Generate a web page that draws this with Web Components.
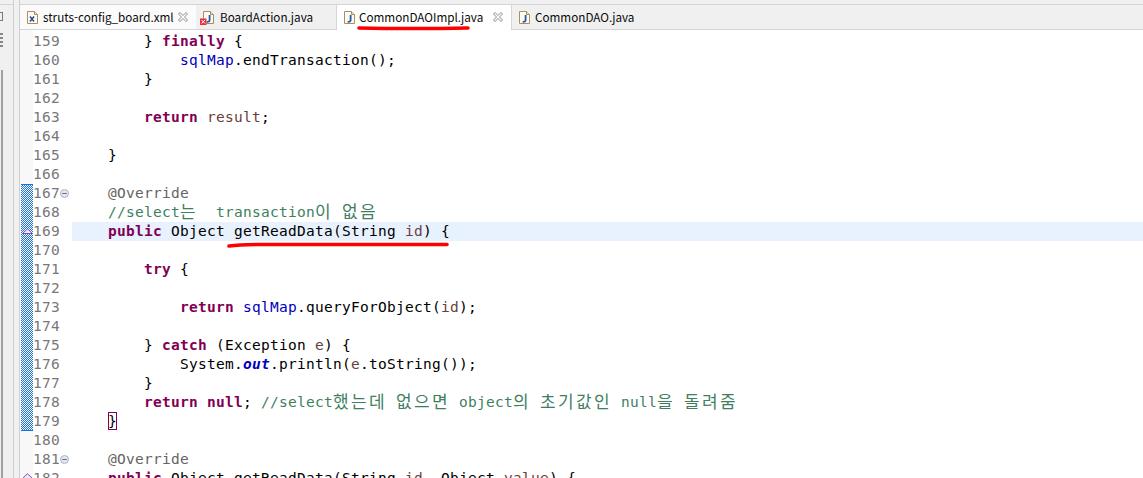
<!DOCTYPE html>
<html lang="ko"><head><meta charset="utf-8"><title>Editor</title>
<style>
html,body{margin:0;padding:0;background:#fff;overflow:hidden}
body{width:1143px;height:478px}
</style></head><body>
<ide-window>
  <ide-tabbar>
    <ide-tab icon="x" close hot w="176">struts-config_board.xml</ide-tab>
    <ide-tab icon="jerr" w="140">BoardAction.java</ide-tab>
    <ide-tab icon="j" close active w="176">CommonDAOImpl.java</ide-tab>
    <ide-tab icon="j" w="140">CommonDAO.java</ide-tab>
  </ide-tabbar>
  <ide-editor>
    <code-line n="159">        } <j-k>finally</j-k> {</code-line>
    <code-line n="160">            <j-f>sqlMap</j-f>.endTransaction();</code-line>
    <code-line n="161">        }</code-line>
    <code-line n="162"></code-line>
    <code-line n="163">        <j-k>return</j-k> <j-v>result</j-v>;</code-line>
    <code-line n="164"></code-line>
    <code-line n="165">    }</code-line>
    <code-line n="166"></code-line>
    <code-line n="167" fold>    <j-a>@Override</j-a></code-line>
    <code-line n="168">    <j-c>//select<j-h>는</j-h>  transaction<j-h>이</j-h> <j-h>없음</j-h></j-c></code-line>
    <code-line n="169" current>    <j-k>public</j-k> Object getReadData(String <j-v>id</j-v>) {</code-line>
    <code-line n="170"></code-line>
    <code-line n="171">        <j-k>try</j-k> {</code-line>
    <code-line n="172"></code-line>
    <code-line n="173">            <j-k>return</j-k> <j-f>sqlMap</j-f>.queryForObject(<j-v>id</j-v>);</code-line>
    <code-line n="174"></code-line>
    <code-line n="175">        } <j-k>catch</j-k> (Exception <j-v>e</j-v>) {</code-line>
    <code-line n="176">            System.<j-s>out</j-s>.println(<j-v>e</j-v>.toString());</code-line>
    <code-line n="177">        }</code-line>
    <code-line n="178">        <j-k>return</j-k> <j-k>null</j-k>; <j-c>//select<j-h>했는데</j-h> <j-h>없으면</j-h> object<j-h>의</j-h> <j-h>초기값인</j-h> null<j-h>을</j-h> <j-h>돌려줌</j-h></j-c></code-line>
    <code-line n="179">    <j-b>}</j-b></code-line>
    <code-line n="180"></code-line>
    <code-line n="181" fold>    <j-a>@Override</j-a></code-line>
    <code-line n="182">    <j-k>public</j-k> Object getReadData(String <j-v>id</j-v>, Object <j-v>value</j-v>) {</code-line>
  </ide-editor>
</ide-window>
<script>
const def=(name,css,html='<slot></slot>')=>customElements.define(name,class extends HTMLElement{
  constructor(){super();this.attachShadow({mode:'open'}).innerHTML=`<style>${css}</style>${html}`;}
});
def('j-k',':host{color:#7f0055;font-weight:700}');
def('j-f',':host{color:#0000c0}');
def('j-v',':host{color:#6a3e3e}');
def('j-c',':host{color:#3f7f5f}');
def('j-a',':host{color:#646464}');
def('j-s',':host{color:#0000c0;font-weight:700;font-style:italic}');
def('j-h',':host{font-family:"Noto Sans CJK KR",sans-serif;font-size:17px;letter-spacing:2.36px;line-height:0;vertical-align:-1px}');
def('j-b',':host{display:inline-block;box-sizing:border-box;width:9px;height:18px;outline:1px solid #7f0055;outline-offset:-1px;line-height:18px;vertical-align:top}');

const fileIcon=(mark,err)=>`<svg width="${err?15:13}" height="15" viewBox="0 0 ${err?15:13} 15" aria-hidden="true">
<g transform="translate(${err?2:0},0)"><path d="M1.5 1.5h7l3 3v9h-10z" fill="#fbfaf5" stroke="#a88f5c"/><path d="M8.5 1.5v3h3" fill="#efe6cf" stroke="#a88f5c"/>
${mark==='x'?'<path d="M4 6.5l4 5M8 6.5l-4 5" stroke="#2c4f88" stroke-width="1.5" fill="none"/>'
:'<path d="M7.6 5v5c0 1.6-1 2-2.9 1.8" stroke="#245a9e" stroke-width="1.8" fill="none"/>'}</g>
${err?'<rect x="0" y="8.5" width="6.5" height="6.5" fill="#e2323c"/><path d="M1.5 10l3.5 3.5M5 10l-3.5 3.5" stroke="#fff" stroke-width="1"/>':''}</svg>`;

customElements.define('ide-tab',class extends HTMLElement{
  constructor(){super();
    const ic=this.getAttribute('icon');
    const active=this.hasAttribute('active');
    const close=this.hasAttribute('close');
    const s=this.attachShadow({mode:'open'});
    s.innerHTML=`<style>
    :host{display:flex;align-items:center;box-sizing:border-box;height:24px;padding-left:${ic==='jerr'?4:6}px;
      width:${this.getAttribute('w')}px;flex:none;color:#0a0a0a;font:11.7px/16px "Noto Sans CJK KR","Noto Sans",sans-serif;
      ${active?'background:#fff;margin-bottom:-1px;height:25px;padding-bottom:1px;border-left:1px solid #d6d6d6;border-right:1px solid #d6d6d6;':''}
      ${this.hasAttribute('hot')?'background:#fbfbfb;':''}}
    .i{display:flex;flex:none;margin-right:${ic==='jerr'?5:(active?3:4)}px}
    .t{flex:none;white-space:nowrap}
    .x{flex:none;margin-left:auto;margin-right:8px;display:flex}
    </style><span class="i">${fileIcon(ic==='x'?'x':'j',ic==='jerr')}</span><span class="t"><slot></slot></span>
    ${close?'<span class="x"><svg width="10" height="10" viewBox="0 0 10 10" aria-hidden="true"><path d="M.5 2l1.5-1.5L5 3.5 8 .5 9.5 2l-3 3 3 3L8 9.5l-3-3-3 3L.5 8l3-3z" fill="#fff" stroke="#8a8a8a"/></svg></span>':''}`;
  }
});
def('ide-tabbar',`:host{display:flex;box-sizing:border-box;height:26px;background:#f0f0f0;
  border-top:1px solid #d4d4d4;border-bottom:1px solid #d4d4d4;flex:none}`);

customElements.define('code-line',class extends HTMLElement{
  constructor(){super();
    const s=this.attachShadow({mode:'open'});
    const fold=this.hasAttribute('fold');
    s.innerHTML=`<style>
    :host{display:flex;height:19px;line-height:19px;white-space:pre;overflow:visible}
    .n{width:27px;flex:none;color:#787878;text-align:right}
    .f{width:12px;flex:none;display:flex;align-items:center}
    .c{flex:1;min-width:0;height:19px;${this.hasAttribute('current')?'background:#e8f2fe;':''}}
    </style><span class="n">${this.getAttribute('n')}</span><span class="f">${fold?
    '<svg width="9" height="9" viewBox="0 0 9 9" aria-hidden="true"><circle cx="4.5" cy="4.5" r="4" fill="#e4e8ee" stroke="#a9b4c4"/><path d="M2.2 4.5h4.6" stroke="#5f6f86"/></svg>':''}</span><span class="c"><slot></slot></span>`;
  }
});

const tri=t=>`<svg class="m" style="top:${t}px" width="11" height="6" viewBox="0 0 11 6" aria-hidden="true"><path d="M.5 5.5L5.5 .8l5 4.7z" fill="#efe9fb" stroke="#7a4fc0"/></svg>`;
def('ide-editor',`:host{display:flex;flex:1;min-height:0;overflow:hidden;background:#fff;color:#000;
  font:14.5px/19px "DejaVu Sans Mono",monospace;letter-spacing:.27px}
  .r{width:12px;flex:none;background:#f8f8f8;padding:154px 0 0 1px;position:relative}
  .b{display:block;shape-rendering:crispEdges}
  .m{position:absolute;left:2px}
  .l{flex:1;min-width:0;padding-top:2px}`,
  `<div class="r"><svg class="b" width="12" height="247" aria-hidden="true"><defs><pattern id="ck" width="2" height="2" patternUnits="userSpaceOnUse"><rect width="2" height="2" fill="#fff"/><rect width="1" height="1" fill="#1572dc"/><rect x="1" y="1" width="1" height="1" fill="#1572dc"/></pattern></defs>
   <rect width="12" height="247" fill="url(#ck)"/><rect width="12" height="1" fill="#1572dc"/><rect y="246" width="12" height="1" fill="#1572dc"/></svg>
   ${tri(198)}${tri(443)}
   </div><div class="l"><slot></slot></div>`);

def('ide-window',`:host{display:flex;width:1143px;height:478px;overflow:hidden;position:relative;font-family:"Noto Sans",sans-serif}
  .side{width:14px;flex:none;box-sizing:border-box;background:#f0f0f0;border-right:1px solid #cfcfcf;position:relative}
  .top{height:4px;border-bottom:1px solid #d4d4d4}
  .ic1{position:absolute;left:0;top:12px;width:3px;height:9px;border:1px solid #777;border-left:0;box-sizing:border-box}
  .ic2{position:absolute;left:0;top:33px;width:3px;height:15px;background:repeating-linear-gradient(#888 0 2px,#eee 2px 4px)}
  .bar{position:absolute;left:1px;top:70px;bottom:0;width:2px;background:#a0a0a0}
  .gap{width:5px;flex:none;background:#f0f0f0;border-right:1px solid #cfcfcf}
  .main{flex:1;min-width:0;display:flex;flex-direction:column;padding-top:4px;background:#f0f0f0}
  .ink{position:absolute;left:0;top:0;pointer-events:none}`,
  `<div class="side"><div class="top"></div><div class="ic1"></div><div class="ic2"></div><div class="bar"></div></div><div class="gap"></div>
   <div class="main"><slot></slot></div>
   <svg class="ink" width="1143" height="478" aria-hidden="true">
   <path d="M359 28Q410 29 468 28" stroke="#f00" stroke-width="3.6" stroke-linecap="round" fill="none"/>
   <path d="M229 246Q240 244.5 262 244.5L447 244.5" stroke="#f00" stroke-width="3.6" stroke-linecap="round" fill="none"/></svg>`);
</script>
</body></html>
